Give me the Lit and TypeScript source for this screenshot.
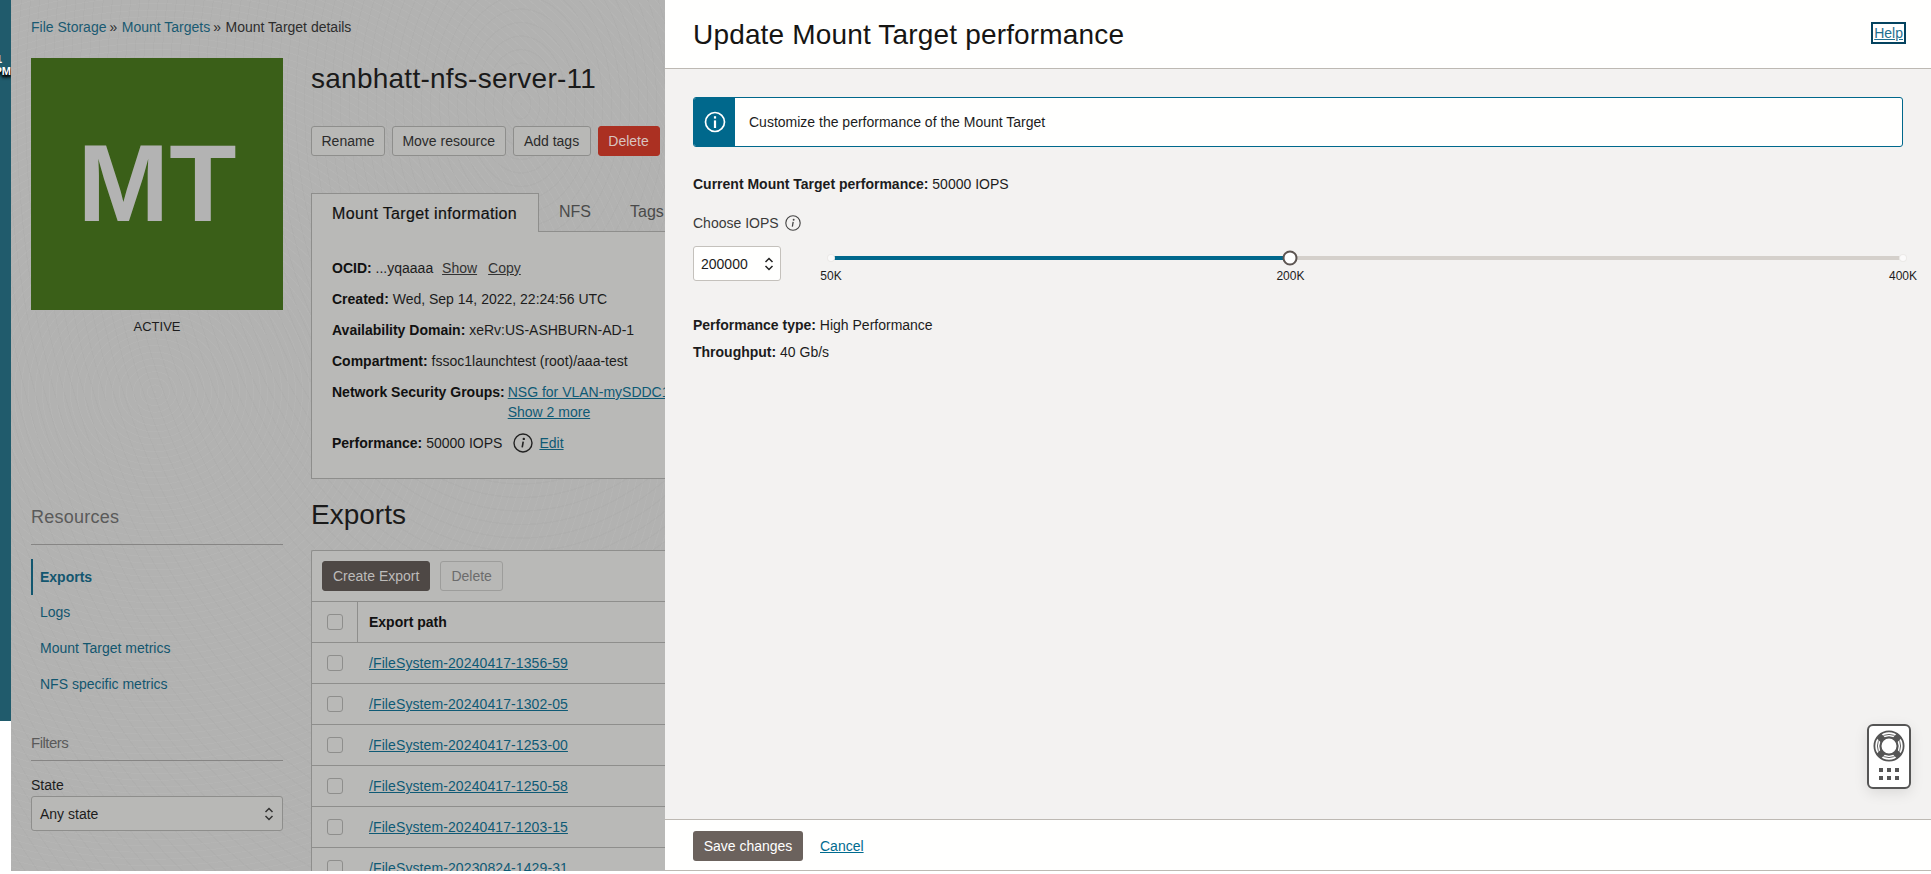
import { css, html, LitElement, svg } from "lit";
import { customElement, state } from "lit/decorators.js";

const infoRows = [
    ["Created:", "Wed, Sep 14, 2022, 22:24:56 UTC"],
    ["Availability Domain:", "xeRv:US-ASHBURN-AD-1"],
    ["Compartment:", "fssoc1launchtest (root)/aaa-test"],
];

const navItems = ["Logs", "Mount Target metrics", "NFS specific metrics"];

const exportPaths = [
    "/FileSystem-20240417-1356-59",
    "/FileSystem-20240417-1302-05",
    "/FileSystem-20240417-1253-00",
    "/FileSystem-20240417-1250-58",
    "/FileSystem-20240417-1203-15",
    "/FileSystem-20230824-1429-31",
];

const chevrons = (color: string) => html`
    <svg class="chevrons" width="10" height="16" viewBox="0 0 10 16">
        <path d="M1.5 6 L5 2.5 L8.5 6 M1.5 10 L5 13.5 L8.5 10" fill="none" stroke=${color} stroke-width="1.5"/>
    </svg>
`;

const infoIcon = (size: number, color: string) => html`
    <svg width=${size} height=${size} viewBox="0 0 20 20">
        <circle cx="10" cy="10" r="9" fill="none" stroke=${color} stroke-width="1.4"/>
        <circle cx="10.8" cy="5.9" r="1.2" fill=${color}/>
        <path d="M10.2 8.6 L9.2 14.4" stroke=${color} stroke-width="1.6" fill="none"/>
    </svg>
`;

// the four dark bands of the life ring
const ringBands = [45, 135, 225, 315].map(
    (a) => svg`<path d="M17 2.5 V9.5" transform="rotate(${a} 17 17)" stroke="#555" stroke-width="6.5"/>`
);

@customElement("app-root")
export class AppRoot extends LitElement {
    @state() iops = 200000;

    private sliderPos(v: number) {
        return ((v - 50000) / 350000) * 100;
    }

    protected override render() {
        const pos = this.sliderPos(this.iops);
        return html`
            <div class="shell">
                <div class="strip">
                    <div class="strip-color">
                        <span class="clock"><span class="hour">1</span><br />PM</span>
                    </div>
                </div>
                <div class="dim">
                    <div class="crumbs">
                        <a>File Storage</a><span class="sep">»</span><a>Mount Targets</a><span class="sep">»</span><span>Mount Target details</span>
                    </div>
                    <div class="columns">
                        <aside class="side">
                            <div class="avatar"><span>MT</span></div>
                            <div class="status">ACTIVE</div>
                            <h3 class="side-title resources">Resources</h3>
                            <nav>
                                <a class="nav-item active">Exports</a>
                                ${navItems.map((n) => html`<a class="nav-item">${n}</a>`)}
                            </nav>
                            <h3 class="side-title filters">Filters</h3>
                            <label class="state-label">State</label>
                            <div class="select">Any state ${chevrons("#333")}</div>
                        </aside>
                        <main class="content">
                            <h1 class="res-title">sanbhatt-nfs-server-11</h1>
                            <div class="actions">
                                <button class="btn">Rename</button>
                                <button class="btn">Move resource</button>
                                <button class="btn tags">Add tags</button>
                                <button class="btn danger">Delete</button>
                            </div>
                            <div class="tabs">
                                <div class="tab active">Mount Target information</div>
                                <div class="tab nfs">NFS</div>
                                <div class="tab">Tags</div>
                            </div>
                            <section class="info">
                                <div class="row"><b>OCID:</b> ...yqaaaa <u class="plain first">Show</u><u class="plain">Copy</u></div>
                                ${infoRows.map(([k, v]) => html`<div class="row"><b>${k}</b> ${v}</div>`)}
                                <div class="row nsg">
                                    <b>Network Security Groups:</b>
                                    <div class="nsg-links">
                                        <a class="link">NSG for VLAN-mySDDC1</a>
                                        <a class="link">Show 2 more</a>
                                    </div>
                                </div>
                                <div class="row perf">
                                    <b>Performance:</b>&nbsp;50000 IOPS
                                    <span class="perf-icon">${infoIcon(20, "#222")}</span>
                                    <a class="link">Edit</a>
                                </div>
                            </section>
                            <h2 class="exports">Exports</h2>
                            <section class="table">
                                <div class="toolbar">
                                    <button class="btn dark">Create Export</button>
                                    <button class="btn disabled">Delete</button>
                                </div>
                                <div class="tr head">
                                    <div class="check-cell"><span class="check"></span></div>
                                    <div class="path-cell">Export path</div>
                                </div>
                                ${exportPaths.map(
                                    (p) => html`
                                        <div class="tr">
                                            <div class="check-cell"><span class="check"></span></div>
                                            <div class="path-cell"><a class="link">${p}</a></div>
                                        </div>
                                    `
                                )}
                            </section>
                        </main>
                    </div>
                </div>
                <div class="drawer">
                    <header class="drawer-head">
                        <h2>Update Mount Target performance</h2>
                        <a class="help">Help</a>
                    </header>
                    <div class="drawer-body">
                        <div class="banner">
                            <div class="banner-icon">
                                <svg width="22" height="22" viewBox="0 0 22 22">
                                    <circle cx="11" cy="11" r="9.5" fill="none" stroke="#fff" stroke-width="1.7"/>
                                    <rect x="9.9" y="9.4" width="2.2" height="7.6" fill="#fff"/>
                                    <rect x="9.9" y="5.2" width="2.2" height="2.4" fill="#fff"/>
                                </svg>
                            </div>
                            <div class="banner-text">Customize the performance of the Mount Target</div>
                        </div>
                        <div class="current"><b>Current Mount Target performance:</b> 50000 IOPS</div>
                        <div class="choose">Choose IOPS ${infoIcon(16, "#444")}</div>
                        <div class="iops">
                            <div class="number">${this.iops} ${chevrons("#222")}</div>
                            <div class="slider">
                                <div class="track"></div>
                                <div class="fill" style="width:${pos}%"></div>
                                <span class="stop" style="left:0"></span>
                                <span class="stop" style="left:100%"></span>
                                <span class="thumb" style="left:${pos}%"></span>
                                <span class="tick" style="left:0">50K</span>
                                <span class="tick" style="left:${pos}%">200K</span>
                                <span class="tick" style="left:100%">400K</span>
                            </div>
                        </div>
                        <div class="meta"><b>Performance type:</b> High Performance</div>
                        <div class="meta"><b>Throughput:</b> 40 Gb/s</div>
                        <div class="helper">
                            <svg width="34" height="34" viewBox="0 0 34 34">
                                <circle cx="17" cy="17" r="14.6" fill="#fff" stroke="#555" stroke-width="1.8"/>
                                ${ringBands}
                                <circle cx="17" cy="17" r="11.6" fill="none" stroke="#555" stroke-width="0.9"/>
                                <circle cx="17" cy="17" r="8.6" fill="#fff" stroke="#555" stroke-width="2.2"/>
                            </svg>
                            <div class="dots">${[0, 1, 2, 3, 4, 5].map(() => html`<i></i>`)}</div>
                        </div>
                    </div>
                    <footer class="drawer-foot">
                        <button class="save">Save changes</button>
                        <a class="cancel">Cancel</a>
                    </footer>
                </div>
            </div>
        `;
    }

    static styles = css`
        :host {
            display: block;
            height: 874px;
            overflow: hidden;
            background: #fff;
            font-family: "Liberation Sans", Arial, sans-serif;
            font-size: 14px;
            line-height: 20px;
            color: #1c1c1c;
        }

        h1, h2, h3 {
            margin: 0;
            font-weight: 400;
        }

        b {
            font-weight: 700;
        }

        .shell {
            display: flex;
            height: 871px;
        }

        /* edge of the page behind the dimmed layer */
        .strip {
            width: 11px;
            flex: none;
            background: #fff;
        }

        .strip-color {
            height: 721px;
            background: #205b6c;
            overflow: hidden;
            position: relative;
        }

        .clock {
            position: absolute;
            right: 0;
            top: 53px;
            font-size: 11px;
            line-height: 12px;
            font-weight: 700;
            color: #fff;
            text-align: right;
            white-space: nowrap;
            text-shadow: 0 2px 2px #000, 0 3px 3px #000;
        }

        .hour {
            margin-right: 9px;
            text-shadow: none;
        }

        .dim {
            width: 654px;
            flex: none;
            overflow: hidden;
            padding: 17px 0 0 20px;
            box-sizing: border-box;
            background-color: #b2b2b1;
            background-image:
                repeating-radial-gradient(ellipse at 22% 45%, rgba(255, 255, 255, 0.035) 0 1px, transparent 1px 7px),
                repeating-radial-gradient(ellipse at 78% 12%, rgba(0, 0, 0, 0.02) 0 1px, transparent 1px 9px);
        }

        .crumbs {
            height: 20px;
            color: #2d2d2d;
            white-space: nowrap;
        }

        .crumbs a {
            color: #1a5a72;
        }

        .sep {
            margin: 0 4.5px 0 3px;
        }

        .columns {
            display: flex;
            gap: 28px;
            margin-top: 21px;
            width: 900px;
        }

        .side {
            width: 252px;
            flex: none;
        }

        .avatar {
            height: 252px;
            background: #3a5f18;
            color: #b3b3b3;
            display: flex;
            align-items: center;
            justify-content: center;
            font-size: 110px;
            font-weight: 700;
            line-height: 1;
        }

        .avatar span {
            margin-top: -2px;
        }

        .status {
            margin-top: 7px;
            height: 19px;
            text-align: center;
            font-size: 13px;
        }

        .side-title {
            font-size: 18px;
            line-height: 24px;
            color: #5a5a5a;
            border-bottom: 1px solid #868584;
        }

        .resources {
            margin-top: 169px;
            padding-bottom: 15px;
            letter-spacing: 0.25px;
        }

        nav {
            margin-top: 14px;
        }

        .nav-item {
            display: block;
            height: 36px;
            line-height: 36px;
            padding-left: 9px;
            color: #12566f;
        }

        .nav-item.active {
            font-weight: 700;
            padding-left: 7px;
            margin-bottom: -1px;
            border-left: 2px solid #12566f;
        }

        .filters {
            font-size: 15px;
            letter-spacing: -0.5px;
            margin-top: 29px;
            padding-bottom: 5px;
        }

        .state-label {
            display: block;
            margin-top: 15px;
            height: 20px;
            line-height: 18px;
        }

        .select {
            height: 35px;
            box-sizing: border-box;
            border: 1px solid #8e8e8c;
            border-radius: 3px;
            background: #b8b8b6;
            padding: 0 8px;
            display: flex;
            align-items: center;
            justify-content: space-between;
        }

        .content {
            flex: 1;
            min-width: 0;
        }

        .res-title {
            font-size: 28px;
            line-height: 40px;
            margin-top: 1px;
            letter-spacing: 0.25px;
            color: #1a1a1a;
            white-space: nowrap;
        }

        .actions {
            display: flex;
            gap: 7px;
            margin-top: 27px;
        }

        .btn {
            height: 30px;
            padding: 0 9.5px;
            font: inherit;
            color: #2b2b2b;
            background: #b8b8b6;
            border: 1px solid #8e8e8c;
            border-radius: 3px;
            white-space: nowrap;
        }

        .btn.tags {
            width: 78px;
            padding: 0;
        }

        .btn.danger {
            width: 62px;
            padding: 0;
            background: #ab3022;
            border-color: #ab3022;
            color: #d8c4c0;
        }

        .btn.dark {
            background: #4e4845;
            border-color: #4e4845;
            color: #bdbbba;
            padding: 0 10px;
        }

        .btn.disabled {
            color: #6c6c6c;
            border-color: #9d9d9b;
            padding: 0 10px;
        }

        .tabs {
            display: flex;
            height: 39px;
            margin-top: 37px;
            box-sizing: border-box;
            border-bottom: 1px solid #8e8e8c;
            font-size: 16px;
            line-height: 38px;
        }

        .tab {
            padding: 0 20px;
            color: #4a4a4a;
        }

        .tab.nfs {
            padding-right: 19px;
        }

        .tab.active {
            width: 228px;
            padding: 0 0 0 20px;
            box-sizing: border-box;
            height: 39px;
            background: #b9b9b7;
            border: 1px solid #8e8e8c;
            border-bottom: none;
            color: #111;
            letter-spacing: 0.35px;
            -webkit-text-stroke: 0.2px #111;
            line-height: 39px;
        }

        .info {
            height: 247px;
            box-sizing: border-box;
            padding: 26px 0 0 20px;
            background: #b9b9b7;
            border-left: 1px solid #8e8e8c;
            border-bottom: 1px solid #8e8e8c;
        }

        .row {
            margin-bottom: 11px;
            white-space: nowrap;
        }

        .row b {
            color: #111;
        }

        .plain {
            margin-left: 6px;
            margin-right: 5px;
            color: #333;
        }

        .plain.first {
            margin-left: 5px;
        }

        .link {
            color: #0f5a75;
            text-decoration: underline;
        }

        .nsg {
            display: flex;
            gap: 3px;
        }

        .nsg-links {
            display: flex;
            flex-direction: column;
        }

        .perf {
            display: flex;
            align-items: center;
        }

        .perf-icon {
            display: flex;
            margin: 0 6px 0 11px;
        }

        .exports {
            font-size: 28px;
            line-height: 40px;
            margin-top: 16px;
            color: #1a1a1a;
        }

        .table {
            margin-top: 15px;
            background: #b9b9b7;
            border: 1px solid #8e8e8c;
            border-right: none;
            border-radius: 2px 0 0 0;
        }

        .toolbar {
            display: flex;
            gap: 10px;
            height: 50px;
            box-sizing: border-box;
            padding: 10px 0 0 10px;
        }

        .tr {
            display: flex;
            height: 41px;
            box-sizing: border-box;
            border-top: 1px solid #8e8e8c;
        }

        .check-cell {
            width: 46px;
            flex: none;
            display: flex;
            align-items: center;
            padding-left: 15px;
            box-sizing: border-box;
        }

        .head .check-cell {
            border-right: 1px solid #8e8e8c;
        }

        .check {
            width: 16px;
            height: 16px;
            box-sizing: border-box;
            border: 1px solid #8e8e8c;
            border-radius: 3px;
        }

        .path-cell {
            display: flex;
            align-items: center;
            padding-left: 11px;
        }

        .path-cell .link {
            letter-spacing: 0.1px;
        }

        .head .path-cell {
            font-weight: 700;
            color: #111;
        }

        .drawer {
            flex: 1;
            min-width: 0;
            display: flex;
            flex-direction: column;
            background: #f3f2f1;
            border-bottom: 1px solid #bdb9b3;
        }

        .drawer-head {
            height: 69px;
            flex: none;
            box-sizing: border-box;
            padding: 0 27px 0 28px;
            background: #fffffe;
            border-bottom: 1px solid #bdb9b3;
            display: flex;
            align-items: center;
            justify-content: space-between;
        }

        .drawer-head h2 {
            font-size: 28px;
            line-height: 40px;
            margin-top: 1px;
            letter-spacing: 0.17px;
            color: #161513;
        }

        .help {
            color: #1f6f8f;
            text-decoration: underline;
            line-height: 18px;
            padding: 0 1px;
            outline: 2px solid #04435f;
            outline-offset: 0;
            margin-top: -2px;
        }

        .drawer-body {
            flex: 1;
            position: relative;
            padding: 28px 28px 0;
        }

        .banner {
            display: flex;
            height: 50px;
            box-sizing: border-box;
            border: 1px solid #00688c;
            border-radius: 3px;
            background: #fffffe;
            overflow: hidden;
        }

        .banner-icon {
            width: 41px;
            flex: none;
            background: #00688c;
            display: flex;
            align-items: center;
            justify-content: center;
        }

        .banner-text {
            padding-left: 14px;
            line-height: 48px;
        }

        .current {
            margin-top: 27px;
        }

        .choose {
            display: flex;
            align-items: center;
            gap: 6px;
            margin-top: 19px;
            color: #3a3a3a;
        }

        .iops {
            display: flex;
            gap: 50px;
            margin-top: 13px;
            height: 35px;
        }

        .number {
            width: 88px;
            flex: none;
            box-sizing: border-box;
            height: 35px;
            padding: 0 6px 0 7px;
            background: #fffffe;
            border: 1px solid #c4c1bc;
            border-radius: 3px;
            display: flex;
            align-items: center;
            justify-content: space-between;
        }

        .slider {
            position: relative;
            flex: 1;
        }

        .track, .fill {
            position: absolute;
            left: 0;
            top: 10px;
            height: 4px;
        }

        .track {
            width: 100%;
            background: #d4d0cb;
        }

        .fill {
            background: #00688c;
        }

        .stop, .thumb {
            position: absolute;
            box-sizing: border-box;
            border-radius: 50%;
            transform: translate(-50%, -50%);
            top: 12px;
        }

        .stop {
            width: 6px;
            height: 6px;
            background: #fbfafa;
            box-shadow: 0 0 0 1px #ebe9e7;
        }

        .thumb {
            width: 15px;
            height: 15px;
            background: #fff;
            border: 2px solid #5c5552;
        }

        .tick {
            position: absolute;
            top: 23px;
            transform: translateX(-50%);
            font-size: 12px;
            line-height: 14px;
            white-space: nowrap;
        }

        .meta {
            margin-bottom: 7px;
        }

        .iops + .meta {
            margin-top: 34px;
        }

        .helper {
            position: absolute;
            right: 20px;
            top: 655px;
            width: 44px;
            height: 65px;
            box-sizing: border-box;
            background: #fff;
            border: 2px solid #555;
            border-radius: 6px;
            box-shadow: 0 4px 14px rgba(0, 0, 0, 0.1);
            display: flex;
            flex-direction: column;
            align-items: center;
            padding-top: 3px;
        }

        .dots {
            display: grid;
            grid-template-columns: repeat(3, 4px);
            gap: 4px;
            margin-top: 5px;
        }

        .dots i {
            width: 4px;
            height: 4px;
            background: #555;
        }

        .drawer-foot {
            height: 51px;
            flex: none;
            box-sizing: border-box;
            padding: 11px 28px 0;
            background: #fffffe;
            border-top: 1px solid #bdb9b3;
            display: flex;
            align-items: flex-start;
            gap: 17px;
        }

        .save {
            height: 30px;
            width: 110px;
            padding: 0;
            font: inherit;
            color: #fff;
            background: #6b625d;
            border: none;
            border-radius: 3px;
        }

        .cancel {
            line-height: 30px;
            color: #006b8f;
            text-decoration: underline;
        }
    `;
}

declare global {
    interface HTMLElementTagNameMap {
        "app-root": AppRoot;
    }
}
